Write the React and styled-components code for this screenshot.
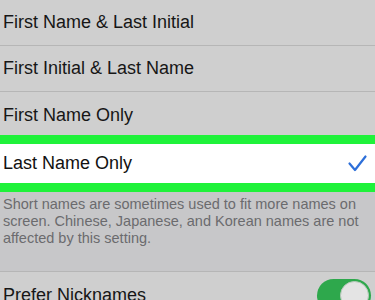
import React from 'react';
import styled, { createGlobalStyle } from 'styled-components';

const GlobalStyle = createGlobalStyle`
  html, body {
    margin: 0;
    padding: 0;
    background: #cfcfcf;
    font-family: "Liberation Sans", Arial, sans-serif;
  }
`;

const Screen = styled.div`
  width: 375px;
  height: 300px;
  overflow: hidden;
  background: #cfcfcf;
`;

const Row = styled.div`
  display: flex;
  align-items: center;
  justify-content: space-between;
  box-sizing: border-box;
  height: ${(p) => p.$height || 46}px;
  padding: ${(p) => p.$padTop || 0}px 8px 0 3px;
  background: #cfcfcf;
  border-bottom: ${(p) => (p.$divider ? '1px solid #b6b6b6' : 'none')};
  color: #161616;
  font-size: 18px;
`;

const SwitchRow = styled.div`
  display: flex;
  align-items: flex-start;
  justify-content: space-between;
  box-sizing: border-box;
  height: 46px;
  padding: 7px 4px 0 3px;
  background: #cfcfcf;
  color: #161616;
  font-size: 18px;
  line-height: 33px;
`;

const Highlight = styled.div`
  display: flex;
  align-items: center;
  justify-content: space-between;
  box-sizing: border-box;
  height: 57px;
  padding: 0 8px 0 3px;
  background: #ffffff;
  border-top: 9px solid #1ff23a;
  border-bottom: 9px solid #1ff23a;
  color: #111111;
  font-size: 18px;
`;

const Footer = styled.div`
  box-sizing: border-box;
  height: 80px;
  padding: 4px 10px 0 3px;
  background: #c7c7c9;
  border-bottom: 1px solid #b6b6b6;
  color: #6b6b6e;
  font-size: 14.5px;
  line-height: 17px;
`;

const Label = styled.span`
  white-space: nowrap;
`;

const Toggle = styled.div`
  display: flex;
  justify-content: flex-end;
  align-items: center;
  box-sizing: border-box;
  width: 54px;
  height: 33px;
  padding: 2px;
  border-radius: 17px;
  background: #2ea84c;
`;

const Knob = styled.div`
  width: 29px;
  height: 29px;
  border-radius: 50%;
  background: #e4e4e4;
  box-sizing: border-box;
  border: 1px solid #b9c9bc;
`;

const Check = () => (
  <svg width="19" height="17" viewBox="0 0 19 17">
    <polyline
      points="1.5,8.5 7,15 17.5,1.5"
      fill="none"
      stroke="#2d6fd9"
      strokeWidth="2.2"
      strokeLinecap="round"
      strokeLinejoin="round"
    />
  </svg>
);

export default function App() {
  return (
    <Screen>
      <GlobalStyle />
      <Row $height={46} $divider>
        <Label>First Name &amp; Last Initial</Label>
      </Row>
      <Row $height={46} $divider>
        <Label>First Initial &amp; Last Name</Label>
      </Row>
      <Row $height={43} $padTop={4}>
        <Label>First Name Only</Label>
      </Row>
      <Highlight>
        <Label>Last Name Only</Label>
        <Check />
      </Highlight>
      <Footer>
        Short names are sometimes used to fit more names on screen. Chinese,
        Japanese, and Korean names are not affected by this setting.
      </Footer>
      <SwitchRow>
        <Label>Prefer Nicknames</Label>
        <Toggle>
          <Knob />
        </Toggle>
      </SwitchRow>
    </Screen>
  );
}
